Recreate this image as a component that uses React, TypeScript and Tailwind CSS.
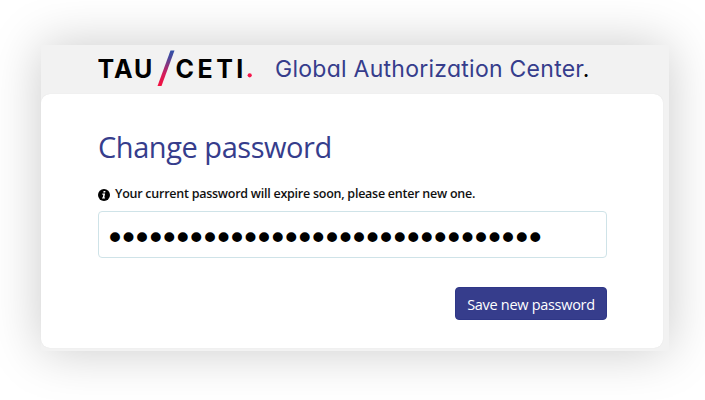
import { useState } from "react";

function Logo() {
  return (
    <svg
      viewBox="0 0 158 40"
      className="h-10 w-[158px] shrink-0"
      role="img"
      aria-label="TAU/CETI."
    >
      <defs>
        <linearGradient id="slash" x1="0" y1="0" x2="0" y2="1">
          <stop offset="0" stopColor="#3050a8" />
          <stop offset="0.2" stopColor="#4b489b" />
          <stop offset="0.65" stopColor="#d31c5c" />
          <stop offset="1" stopColor="#f5103f" />
        </linearGradient>
      </defs>
      <g className="fill-black font-['Inter'] text-[25px] font-bold">
        <text x="-0.6" y="29.5" textLength="55">
          TAU
        </text>
        <text x="77.4" y="29.5" textLength="68">
          CETI
        </text>
      </g>
      <path d="M72.5 2.5h4L63.5 38h-4z" fill="url(#slash)" />
      <circle cx="151.7" cy="27.3" r="2.1" fill="#f5164b" />
    </svg>
  );
}

function InfoIcon() {
  return (
    <svg viewBox="0 0 12 12" className="mt-[4px] size-3 shrink-0" aria-hidden>
      <circle cx="6" cy="6" r="6" fill="#000" />
      <path
        d="M5.6 2h1.9l-.3 1.6H5.3zM4.4 4.6h2.7L6.3 8.5h.8l-.2 1.1H4l.2-1.1h.5l.6-2.8h-1z"
        fill="#fff"
      />
    </svg>
  );
}

export default function App() {
  const [password, setPassword] = useState("x".repeat(32));

  return (
    <div className="h-[400px] w-[705px] overflow-hidden bg-white pt-[45px] pl-[41px]">
      <main className="h-[306px] w-[628px] bg-[#f2f2f2] shadow-[0_0_48px_rgba(0,0,0,0.21)]">
        <header className="flex h-[49px] items-start pt-[3px] pl-[57px]">
          <Logo />
          <p className="ml-[19px] pt-[4px] font-['Inter'] text-[23px] leading-[34px] font-normal tracking-[0.26px] whitespace-nowrap text-[#363d8c] [font-feature-settings:'cv11']">
            Global Authorization Center<span className="text-black">.</span>
          </p>
        </header>

        <form
          className="flex h-[254px] w-[622px] flex-col rounded-[9px] bg-white pr-[56px] pl-[57px] font-['Open_Sans'] shadow-[0_0_1px_#ddd]"
          onSubmit={(event) => event.preventDefault()}
        >
          <h1 className="mt-[33px] h-10 text-[29px] leading-10 tracking-[-0.45px] whitespace-nowrap text-[#363d8c]">
            Change password
          </h1>
          <label
            htmlFor="password"
            className="mt-[18px] flex h-[18px] gap-[5px] text-[12.5px] leading-[18px] font-semibold tracking-[-0.25px] whitespace-nowrap text-[#111]"
          >
            <InfoIcon />
            Your current password will expire soon, please enter new one.
          </label>
          <input
            id="password"
            type="password"
            value={password}
            onChange={(event) => setPassword(event.target.value)}
            className="mt-[8px] h-[47px] w-full shrink-0 rounded-[4px] border border-[#cfe3e8] px-[6px] pt-[8px] font-['DejaVu_Sans'] text-[34px] tracking-[-6.5px] text-black outline-none"
          />
          <button
            type="submit"
            className="mt-[29px] h-[33px] w-[152px] shrink-0 self-end rounded-[4px] border border-[#2f3787] bg-[#363d8c] pt-[2px] text-[14.5px] tracking-[-0.3px] whitespace-nowrap text-white"
          >
            Save new password
          </button>
        </form>
      </main>
    </div>
  );
}
